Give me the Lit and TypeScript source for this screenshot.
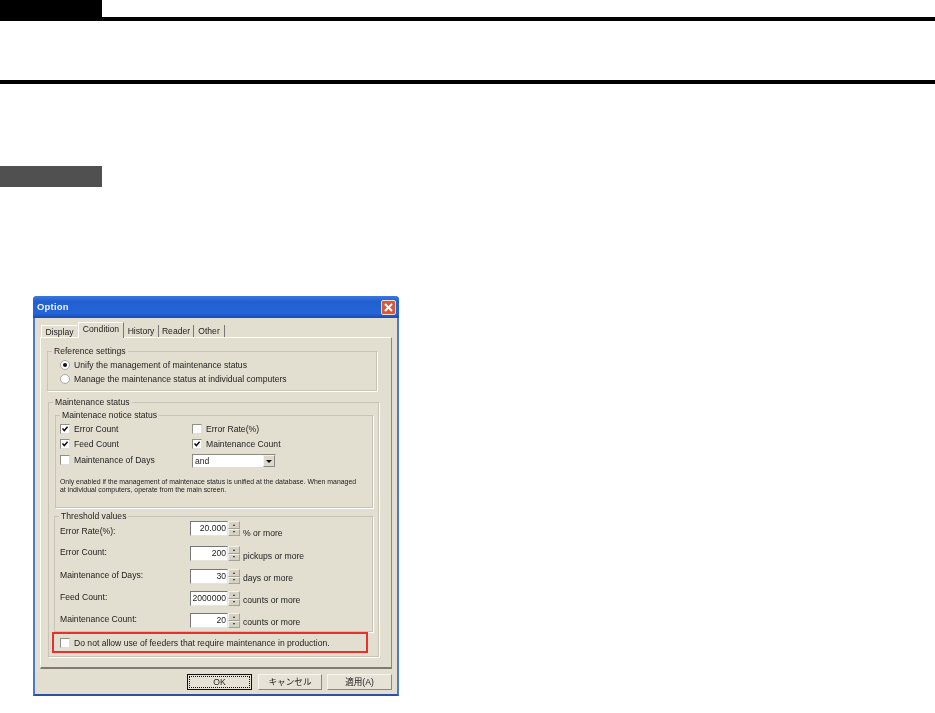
import { LitElement, html, css, svg } from "lit";
import { customElement } from "lit/decorators.js";

const check = svg`<svg class="tick" viewBox="0 0 8 8" width="8" height="8"><path d="M1.5 3.5 L3.3 5.6 L6.6 1.8" fill="none" stroke="#111" stroke-width="1.5"/></svg>`;

@customElement("app-root")
export class AppRoot extends LitElement {
  static styles = css`
    :host { display: block; width: 935px; height: 713px; background: #fff; font-family: "Liberation Sans", Arial, sans-serif; overflow: hidden; }
    .head { display: flex; height: 17px; }
    .blk { width: 102px; background: #000; }
    .rule { height: 4px; background: #000; }
    .sp1 { height: 59px; }
    .sp2 { height: 82px; }
    .note { width: 102px; height: 21px; background: #505050; }
    .sp3 { height: 109px; }
    .dlg { margin-left: 33px; width: 366px; height: 400px; box-sizing: border-box; background: #e2dfd0; border: 2px solid #4d7ac8; border-bottom-color: #2a50a8; border-top: 0; border-radius: 4px 4px 0 0; filter: blur(0.5px); color: #222; font-size: 8.6px; line-height: 10px; display: flex; flex-direction: column; }
    .title { height: 22px; margin: 0 -2px; flex: none; background: linear-gradient(#3a78e0, #2260d0 25%, #2464d8 80%, #1a4cb0); border-radius: 4px 4px 0 0; display: flex; align-items: center; justify-content: space-between; padding: 0 3px 0 4px; color: #eef2fb; font-weight: bold; font-size: 9.5px; letter-spacing: 0.2px; }
    .close { width: 15px; height: 15px; border-radius: 2px; background: #d8583a; border: 1px solid #eadfd8; box-sizing: border-box; display: flex; }
    .tabs { display: flex; height: 19px; margin-left: 6px; align-items: flex-end; flex: none; }
    .tab { height: 12px; box-sizing: border-box; border-right: 1px solid #777; text-align: center; line-height: 12px; margin-bottom: 0; }
    .tab:nth-child(1) { width: 36px; border-left: 1px solid #fff; border-top: 1px solid #fff; border-right: 0; margin-right: 1px; }
    .tab.on { width: 46px; height: 16px; line-height: 12px; margin-bottom: -1px; background: #e2dfd0; border-top: 1px solid #fff; border-left: 1px solid #fff; position: relative; }
    .tab:nth-child(3), .tab:nth-child(4) { width: 35px; }
    .tab:nth-child(5) { width: 31px; }
    .panel { margin: 0 5px; height: 332px; flex: none; box-sizing: border-box; border: 1px solid #fff; border-right: 1px solid #8a8878; border-bottom: 2px solid #7e7c70; padding: 13px 6px 0 6px; }
    .grp { position: relative; border: 1px solid #c6c4b6; box-shadow: 1px 1px 0 #fff; box-sizing: border-box; }
    .lg { position: absolute; top: -6px; left: 4px; background: #e2dfd0; padding: 0 2px; white-space: nowrap; }
    .ref { width: 330px; height: 40px; padding: 8px 0 0 12px; display: flex; flex-direction: column; gap: 4px; }
    .row { display: flex; align-items: center; height: 10px; gap: 4px; white-space: nowrap; }
    .radio { width: 8px; height: 8px; border-radius: 50%; background: #fff; border: 1px solid #a8a89c; display: flex; align-items: center; justify-content: center; flex: none; }
    .radio.on::after { content: ""; width: 4px; height: 4px; border-radius: 50%; background: #111; }
    .cb { width: 8px; height: 8px; background: #fff; border: 1px solid #8f8f84; border-right-color: #ddd; border-bottom-color: #ddd; display: flex; flex: none; }
    .tick { display: block; }
    .main { width: 331px; height: 255px; margin: 11px 0 0 1px; padding: 12px 0 0 6px; }
    .notice { width: 318px; height: 93px; padding: 7px 0 0 4px; }
    .ng { display: grid; grid-template-columns: 132px 1fr; row-gap: 4.5px; align-items: start; }
    .ng .row { height: 11px; }
    .sel { width: 84px; height: 14px; background: #fff; box-sizing: border-box; border: 1px solid #8a8a80; border-right-color: #ddd; border-bottom-color: #ddd; display: flex; align-items: center; justify-content: space-between; padding-left: 2px; }
    .drop { width: 12px; height: 12px; background: #dcd9ca; border: 1px solid #888; border-top-color: #f4f2ea; border-left-color: #f4f2ea; box-sizing: border-box; display: flex; align-items: center; justify-content: center; }
    .drop::after { content: ""; border: 3px solid transparent; border-top: 3px solid #111; border-bottom: 0; }
    .info { margin-top: 10px; font-size: 6.9px; line-height: 8px; white-space: nowrap; }
    .thr { width: 319px; height: 116px; margin: 8px 0 0 -1px; padding: 4px 0 0 5px; }
    .tg { display: grid; grid-template-columns: 130px 1fr; grid-template-rows: 25px 23px 22px 22px 22px; }
    .spin { display: flex; align-items: flex-start; white-space: nowrap; }
    .inp { width: 38px; height: 15px; background: #fff; border: 1px solid #777; border-right-color: #e8e6dc; border-bottom-color: #e8e6dc; box-sizing: border-box; text-align: right; line-height: 13px; padding-right: 1px; }
    .arr { display: flex; flex-direction: column; width: 12px; height: 15px; }
    .arr i { flex: 1; background: #d6d3c4; border: 1px solid #a4a296; border-top-color: #f2f0e8; border-left-color: #f2f0e8; box-sizing: border-box; display: flex; align-items: center; justify-content: center; }
    .arr i::after { content: ""; border: 1.5px solid transparent; }
    .arr i.up::after { border-bottom: 2px solid #222; border-top: 0; }
    .arr i.dn::after { border-top: 2px solid #222; border-bottom: 0; }
    .unit { margin-left: 3px; }
    .red { width: 316px; height: 21px; margin-left: -3px; box-sizing: border-box; border: 2px solid #e8302c; padding-left: 6px; display: flex; align-items: center; gap: 4px; white-space: nowrap; position: relative; }
    .btns { display: flex; justify-content: flex-end; gap: 5px; margin: 5px 5px 0 0; flex: none; }
    .btn { width: 64px; height: 16px; box-sizing: border-box; border: 1px solid #8a8878; border-top-color: #f6f4ec; border-left-color: #f6f4ec; background: #e6e3d6; text-align: center; line-height: 14px; font-family: "Liberation Sans", "Noto Sans CJK JP", sans-serif; }
    .btn:last-child { width: 65px; }
    .btn.ok { width: 65px; margin-right: 1px; border-color: #111; outline: 1px dotted #111; outline-offset: -3px; }
  `;

  render() {
    const cb = (on: boolean) => html`<span class="cb">${on ? check : ""}</span>`;
    const thr: [string, string, string, number, number][] = [
      ["Error Rate(%):", "20.000", "% or more", 5, 7],
      ["Error Count:", "200", "pickups or more", 1, 5],
      ["Maintenance of Days:", "30", "days or more", 1, 4],
      ["Feed Count:", "2000000", "counts or more", 1, 4],
      ["Maintenance Count:", "20", "counts or more", 1, 4],
    ];
    return html`
      <div class="head"><div class="blk"></div></div>
      <div class="rule"></div>
      <div class="sp1"></div>
      <div class="rule"></div>
      <div class="sp2"></div>
      <div class="note"></div>
      <div class="sp3"></div>
      <div class="dlg">
        <div class="title"><span>Option</span><span class="close"><svg viewBox="0 0 13 13" width="13" height="13"><path d="M3 3 L10 10 M10 3 L3 10" stroke="#fff" stroke-width="2"/></svg></span></div>
        <div class="tabs">
          <div class="tab">Display</div><div class="tab on">Condition</div><div class="tab">History</div><div class="tab">Reader</div><div class="tab">Other</div>
        </div>
        <div class="panel">
          <div class="grp ref">
            <span class="lg">Reference settings</span>
            <div class="row"><span class="radio on"></span>Unify the management of maintenance status</div>
            <div class="row"><span class="radio"></span>Manage the maintenance status at individual computers</div>
          </div>
          <div class="grp main">
            <span class="lg">Maintenance status</span>
            <div class="grp notice">
              <span class="lg">Maintenace notice status</span>
              <div class="ng">
                <div class="row">${cb(true)}Error Count</div><div class="row">${cb(false)}Error Rate(%)</div>
                <div class="row">${cb(true)}Feed Count</div><div class="row">${cb(true)}Maintenance Count</div>
                <div class="row">${cb(false)}Maintenance of Days</div><div class="sel">and<span class="drop"></span></div>
              </div>
              <div class="info">Only enabled if the management of maintenace status is unified at the database. When managed<br>at individual computers, operate from the main screen.</div>
            </div>
            <div class="grp thr">
              <span class="lg">Threshold values</span>
              <div class="tg">
                ${thr.map(([a, b, c, lp, up]) => html`<div style="padding-top:${lp}px">${a}</div><div class="spin"><span class="inp">${b}</span><span class="arr"><i class="up"></i><i class="dn"></i></span><span class="unit" style="padding-top:${up}px">${c}</span></div>`)}
              </div>
            </div>
            <div class="red">${cb(false)}Do not allow use of feeders that require maintenance in production.</div>
          </div>
        </div>
        <div class="btns"><div class="btn ok">OK</div><div class="btn">キャンセル</div><div class="btn">適用(A)</div></div>
      </div>
    `;
  }
}
